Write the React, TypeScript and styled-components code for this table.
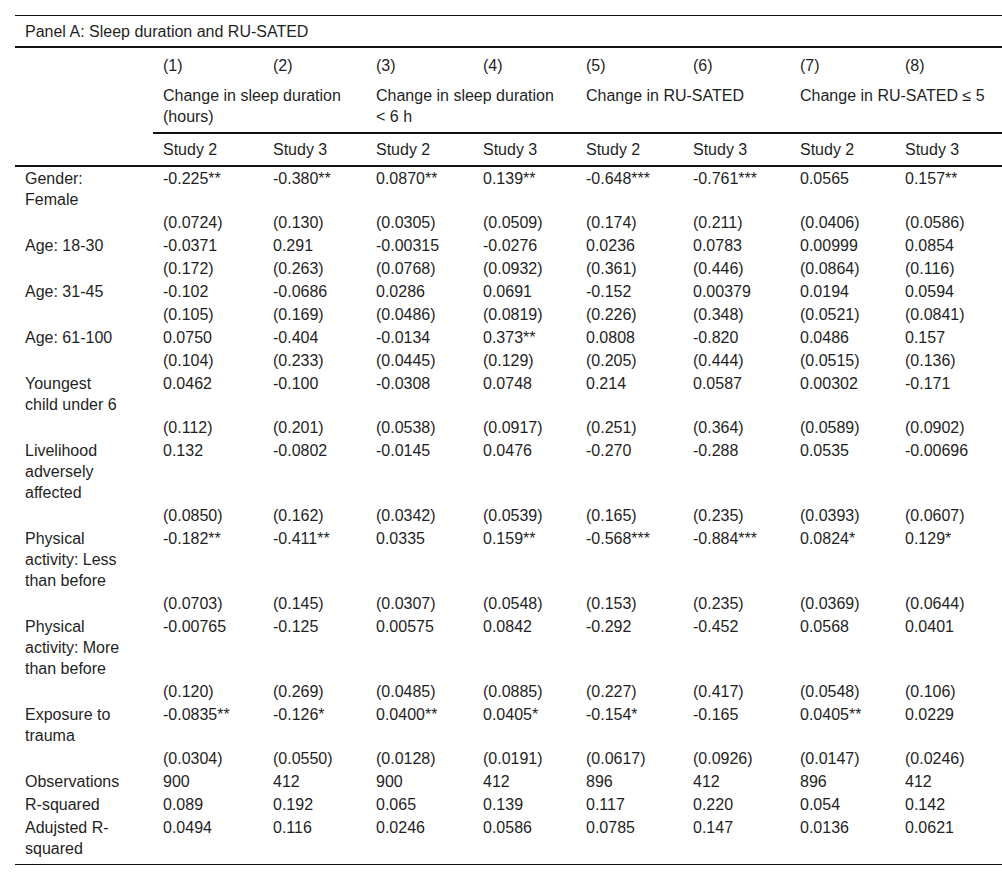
import React from 'react';
import styled, { createGlobalStyle } from 'styled-components';

const GlobalStyle = createGlobalStyle`
  html, body {
    margin: 0;
    padding: 0;
    background: #fff;
  }
  body {
    font-family: "Liberation Sans", Arial, sans-serif;
    color: #1f1f1f;
  }
`;

const Page = styled.div`
  padding: 15px 0 16px 15px;
`;

const Table = styled.table`
  width: 987px;
  table-layout: fixed;
  border-collapse: collapse;
  font-size: 16px;
  line-height: 21px;
  border-top: 1px solid #111;
  border-bottom: 1px solid #111;
`;

const PanelCell = styled.th`
  text-align: left;
  font-weight: normal;
  padding: 5px 10px 4px;
  border-bottom: 2px solid #111;
`;

const HeadCell = styled.th<{ $pad: string; $rule?: boolean }>`
  text-align: left;
  vertical-align: top;
  font-weight: normal;
  padding: ${(p) => p.$pad};
  border-bottom: ${(p) => (p.$rule ? '2px solid #111' : 'none')};
`;

const BodyRow = styled.tr`
  &:last-child td {
    padding-bottom: 5px;
  }
`;

const Label = styled.td`
  vertical-align: top;
  padding: 1px 30px 1px 10px;
  overflow: visible;
`;

const Cell = styled.td`
  vertical-align: top;
  padding: 1px 4px 1px 10px;
  white-space: nowrap;
`;

const widths = [138, 110, 103, 107, 103, 107, 107, 105, 107];

type Row = { label: string; values: string[] };

const rows: Row[] = [
  { label: 'Gender: Female', values: ['-0.225**', '-0.380**', '0.0870**', '0.139**', '-0.648***', '-0.761***', '0.0565', '0.157**'] },
  { label: '', values: ['(0.0724)', '(0.130)', '(0.0305)', '(0.0509)', '(0.174)', '(0.211)', '(0.0406)', '(0.0586)'] },
  { label: 'Age: 18-30', values: ['-0.0371', '0.291', '-0.00315', '-0.0276', '0.0236', '0.0783', '0.00999', '0.0854'] },
  { label: '', values: ['(0.172)', '(0.263)', '(0.0768)', '(0.0932)', '(0.361)', '(0.446)', '(0.0864)', '(0.116)'] },
  { label: 'Age: 31-45', values: ['-0.102', '-0.0686', '0.0286', '0.0691', '-0.152', '0.00379', '0.0194', '0.0594'] },
  { label: '', values: ['(0.105)', '(0.169)', '(0.0486)', '(0.0819)', '(0.226)', '(0.348)', '(0.0521)', '(0.0841)'] },
  { label: 'Age: 61-100', values: ['0.0750', '-0.404', '-0.0134', '0.373**', '0.0808', '-0.820', '0.0486', '0.157'] },
  { label: '', values: ['(0.104)', '(0.233)', '(0.0445)', '(0.129)', '(0.205)', '(0.444)', '(0.0515)', '(0.136)'] },
  { label: 'Youngest child under 6', values: ['0.0462', '-0.100', '-0.0308', '0.0748', '0.214', '0.0587', '0.00302', '-0.171'] },
  { label: '', values: ['(0.112)', '(0.201)', '(0.0538)', '(0.0917)', '(0.251)', '(0.364)', '(0.0589)', '(0.0902)'] },
  { label: 'Livelihood adversely affected', values: ['0.132', '-0.0802', '-0.0145', '0.0476', '-0.270', '-0.288', '0.0535', '-0.00696'] },
  { label: '', values: ['(0.0850)', '(0.162)', '(0.0342)', '(0.0539)', '(0.165)', '(0.235)', '(0.0393)', '(0.0607)'] },
  { label: 'Physical activity: Less than before', values: ['-0.182**', '-0.411**', '0.0335', '0.159**', '-0.568***', '-0.884***', '0.0824*', '0.129*'] },
  { label: '', values: ['(0.0703)', '(0.145)', '(0.0307)', '(0.0548)', '(0.153)', '(0.235)', '(0.0369)', '(0.0644)'] },
  { label: 'Physical activity: More than before', values: ['-0.00765', '-0.125', '0.00575', '0.0842', '-0.292', '-0.452', '0.0568', '0.0401'] },
  { label: '', values: ['(0.120)', '(0.269)', '(0.0485)', '(0.0885)', '(0.227)', '(0.417)', '(0.0548)', '(0.106)'] },
  { label: 'Exposure to trauma', values: ['-0.0835**', '-0.126*', '0.0400**', '0.0405*', '-0.154*', '-0.165', '0.0405**', '0.0229'] },
  { label: '', values: ['(0.0304)', '(0.0550)', '(0.0128)', '(0.0191)', '(0.0617)', '(0.0926)', '(0.0147)', '(0.0246)'] },
  { label: 'Observations', values: ['900', '412', '900', '412', '896', '412', '896', '412'] },
  { label: 'R-squared', values: ['0.089', '0.192', '0.065', '0.139', '0.117', '0.220', '0.054', '0.142'] },
  { label: 'Adujsted R-squared', values: ['0.0494', '0.116', '0.0246', '0.0586', '0.0785', '0.147', '0.0136', '0.0621'] },
];

const groups: React.ReactNode[] = [
  <>Change in sleep duration<br />(hours)</>,
  <>Change in sleep duration<br />&lt; 6 h</>,
  <>Change in RU-SATED</>,
  <>Change in RU-SATED ≤ 5</>,
];

export default function App() {
  return (
    <Page>
      <GlobalStyle />
      <Table>
        <colgroup>
          {widths.map((w, i) => (
            <col key={i} style={{ width: w }} />
          ))}
        </colgroup>
        <thead>
          <tr>
            <PanelCell colSpan={9}>Panel A: Sleep duration and RU-SATED</PanelCell>
          </tr>
          <tr>
            <HeadCell $pad="7px 10px 2px" />
            {[1, 2, 3, 4, 5, 6, 7, 8].map((n) => (
              <HeadCell key={n} $pad="7px 4px 2px 10px">({n})</HeadCell>
            ))}
          </tr>
          <tr>
            <HeadCell $pad="7px 10px 5px" />
            {groups.map((g, i) => (
              <HeadCell key={i} colSpan={2} $pad="7px 4px 5px 10px" $rule>
                {g}
              </HeadCell>
            ))}
          </tr>
          <tr>
            <HeadCell $pad="5px 10px" $rule />
            {[2, 3, 2, 3, 2, 3, 2, 3].map((s, i) => (
              <HeadCell key={i} $pad="5px 4px 5px 10px" $rule>Study {s}</HeadCell>
            ))}
          </tr>
        </thead>
        <tbody>
          {rows.map((r, i) => (
            <BodyRow key={i}>
              <Label>{r.label}</Label>
              {r.values.map((v, j) => (
                <Cell key={j}>{v}</Cell>
              ))}
            </BodyRow>
          ))}
        </tbody>
      </Table>
    </Page>
  );
}
